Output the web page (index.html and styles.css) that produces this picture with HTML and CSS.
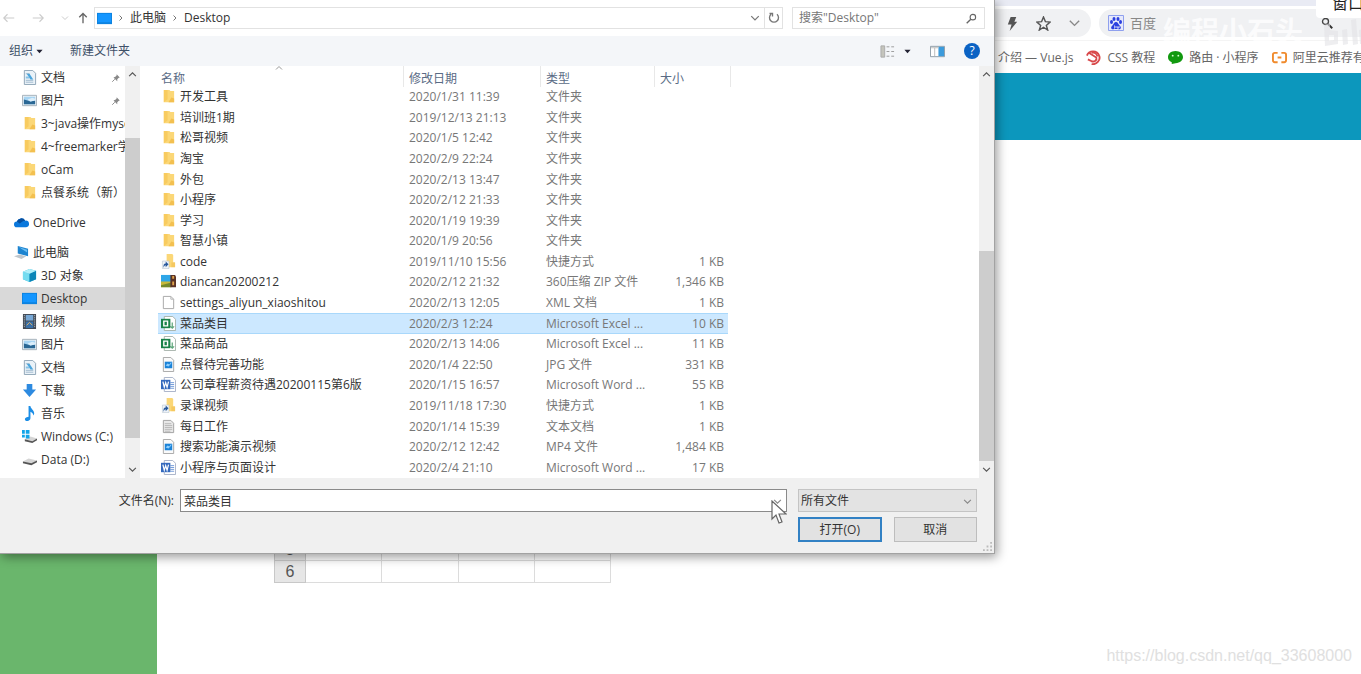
FILE: index.html
```html
<!DOCTYPE html>
<html lang="zh-CN">
<head>
<meta charset="utf-8">
<title>打开</title>
<link rel="stylesheet" href="styles.css">
</head>
<body>
<svg class="defs" aria-hidden="true">
  <symbol id="folder" viewBox="0 0 16 16"><path d="M3 1h6l1 1h4v12H3z" fill="#fbd777"/><path d="M3 1h4v10l-4 3z" fill="#f8cb5f"/><path d="M11 9l3 1v4H8z" fill="#f3c050"/></symbol>
  <symbol id="shortcut" viewBox="0 0 16 16"><path d="M6 0h6l1 1v8h2v5H6z" fill="#fbd777"/><path d="M11 9h4v5h-4z" fill="#f5c860"/><path d="M1.500 7.500h7v8h-7z" fill="#eef3f8" stroke="#b8c4d0" stroke-width=".6"/><path d="M3 15c-1-3 0-5 2-5V8l3 3-3 3v-2c-1 0-2 1-2 3z" fill="#28589c"/></symbol>
  <symbol id="zip" viewBox="0 0 16 16"><path d="M0 1h11v8H0z" fill="#2ea6e8"/><path d="M0 8h11v6H0z" fill="#c8b93a"/><path d="M0 12l11-3v5H0z" fill="#76892c"/><path d="M10 1h5l1 2v11h-6z" fill="#5b3326"/><path d="M12 2h2v3h-2zm0 6h2v4h-2z" fill="#e0a44b"/></symbol>
  <symbol id="file" viewBox="0 0 16 16"><path d="M2.500 1.500h8l3 3v10h-11z" fill="#fff" stroke="#a5a5a5"/><path d="M10.500 1.500v3h3" fill="none" stroke="#b5b5b5"/></symbol>
  <symbol id="text" viewBox="0 0 16 16"><path d="M2.500 1.500h8l3 3v10h-11z" fill="#e8e8e8" stroke="#a0a0a0"/><path d="M4 5h7M4 7h8M4 9h8M4 11h8M4 13h6" stroke="#aaa" stroke-width=".8"/></symbol>
  <symbol id="excel" viewBox="0 0 16 16"><path d="M3.500.5h9l3 3v12h-12z" fill="#fff" stroke="#a5b2aa"/><path d="M12 7v6M10 11l2 2 2-2" fill="none" stroke="#5ea67b" stroke-width="1.300"/><path d="M0 3h10v10H0z" fill="#1a824a"/><path d="M3 5.500h4v5H3z" fill="none" stroke="#fff" stroke-width="1.500"/></symbol>
  <symbol id="word" viewBox="0 0 16 16"><path d="M3.500.5h9l3 3v12h-12z" fill="#fff" stroke="#a5b0c6"/><path d="M10 6h4M10 8h4M10 10h4M10 12h4" stroke="#6e97d8"/><path d="M0 3h10v10H0z" fill="#3469bd"/><path d="M2 5l1.500 6L5 6l1.500 5L8 5" fill="none" stroke="#fff" stroke-width="1.300"/></symbol>
  <symbol id="media" viewBox="0 0 16 16"><path d="M2.500.5h8l3 3v12h-11z" fill="#fafafa" stroke="#a5a5a5"/><path d="M4 5h8v7H4z" fill="#1b83d8"/><path d="M5 9l2-2 2 1 2-3v2l-3 3z" fill="#8fd0ff"/></symbol>
  <symbol id="doc" viewBox="0 0 16 16"><path d="M2.500.5h9l3 3v12h-12z" fill="#eaf2f8" stroke="#8da3b5"/><path d="M4 4h4M4 11h8M4 13h8" stroke="#9eb8cc"/><path d="M5 4h3l4 6H9z" fill="#4aa4dc"/><path d="M4 7h3l1 2H4z" fill="#88c2e6"/></symbol>
  <symbol id="picture" viewBox="0 0 16 16"><path d="M.5 2.500h15v11H.5z" fill="#e8eef3" stroke="#a3afb9"/><path d="M2 4h12v8H2z" fill="#a6d4f3"/><path d="M2 7l4 1 3 1 5-1v4H2z" fill="#2a6794"/><path d="M6 7l5-2 3 1v2l-5 1z" fill="#dceefa"/></symbol>
  <symbol id="desktop" viewBox="0 0 16 16"><path d="M0 2h16v12H0z" fill="#0d83e0"/><path d="M1 3h14v9H1z" fill="#1496ff"/></symbol>
  <symbol id="cube" viewBox="0 0 16 16"><path d="M1 4l7-3 7 2v9l-7 3-7-3z" fill="#35b5dc"/><path d="M1 4l7 2v9l-7-3z" fill="#74dcf0"/><path d="M8 6l7-3v9l-7 3z" fill="#0c86b8"/><path d="M1 4l7-3 7 2-7 3z" fill="#b1eff9"/></symbol>
  <symbol id="video" viewBox="0 0 16 16"><path d="M1 0h14v16H1z" fill="#424953"/><path d="M4 1h8v6H4z" fill="#78a8d6"/><path d="M4 8h8v7H4z" fill="#3a70a8"/><path d="M5 12l3-3 3 3" stroke="#e6b25e" fill="none"/><path d="M2.500 1v14M13.500 1v14" stroke="#b9c2ca" stroke-dasharray="1 1"/></symbol>
  <symbol id="down" viewBox="0 0 16 16"><path d="M5 1h6v6h4l-7 8-7-8h4z" fill="#2d8ae0"/></symbol>
  <symbol id="music" viewBox="0 0 16 16"><path d="M7 0h2c0 3 4 4 4 8 0 1-1 2-1 2 0-2-1-3-3-4v7c0 2-2 3-4 3s-3-3 0-4l2-.5z" fill="#1c8ee6"/></symbol>
  <symbol id="drive" viewBox="0 0 16 16"><path d="M1 10l6-3 9 2-6 4z" fill="#d5d5d5"/><path d="M1 10l9 2 6-3v2l-6 3-9-2z" fill="#555"/></symbol>
  <symbol id="windrive" viewBox="0 0 16 16"><path d="M3 11l6-3 7 2-5 3z" fill="#d5d5d5"/><path d="M3 11l8 2 5-3v2l-5 3-8-2z" fill="#555"/><path d="M0 1h3v4H0zM4 1h4v4H4zM0 6h3v3H0zM4 6h4v4H4z" fill="#12a4e8"/></symbol>
  <symbol id="cloud" viewBox="0 0 16 16"><path d="M3 13a3 3 0 0 1 0-6 5 5 0 0 1 9-1 3.500 3.500 0 0 1 1 7z" fill="#0a78dc"/><path d="M3 7a5 5 0 0 1 9-1c-3 0-4 2-6 3z" fill="#064fa0"/></symbol>
  <symbol id="pc" viewBox="0 0 16 16"><path d="M4 1l11 3v8L4 9z" fill="#1d84d0"/><path d="M5 2l9 3v3z" fill="#69bdf2"/><path d="M0 12l6-2 7 2-5 3z" fill="#bfc6cc"/></symbol>
  <symbol id="pin" viewBox="0 0 16 16"><path d="M9 2l5 5-2 1-2 2v3L4 7l3-1 2-2z" fill="#888"/><path d="M6 10l-4 4" stroke="#888" stroke-width="1.500"/></symbol>
  <symbol id="chev-down" viewBox="0 0 16 16"><path d="M2 5l6 6 6-6" fill="none" stroke="currentColor" stroke-width="2"/></symbol>
  <symbol id="chev-up" viewBox="0 0 16 16"><path d="M2 11l6-6 6 6" fill="none" stroke="currentColor" stroke-width="2"/></symbol>
  <symbol id="chev-right" viewBox="0 0 16 16"><path d="M5 3l5 5-5 5" fill="none" stroke="currentColor" stroke-width="2"/></symbol>
  <symbol id="caret" viewBox="0 0 16 16"><path d="M1 4h14l-7 8z" fill="currentColor"/></symbol>
  <symbol id="arrow" viewBox="0 0 16 16"><path d="M1 8h14M6 3L1 8l5 5" fill="none" stroke="currentColor" stroke-width="1.500"/></symbol>
  <symbol id="arrow-up" viewBox="0 0 16 16"><path d="M8 15V2M3 7l5-5 5 5" fill="none" stroke="currentColor" stroke-width="1.800"/></symbol>
</svg>

<div class="browser">
  <header class="chrome">
    <div class="tabstrip"></div>
    <div class="addressbar">
      <div class="tools">
        <button aria-label="极速模式"><svg viewBox="0 0 16 16"><path d="M6 1h6l-2 5h3L5 16l2-7H3z" fill="#555"/></svg></button>
        <button aria-label="收藏"><svg viewBox="0 0 16 16"><path d="M8 1l2 5 5 .5-4 3.500 1.500 5L8 12l-4.500 3L5 10 1 6.500 6 6z" fill="none" stroke="#555" stroke-width="1.500"/></svg></button>
        <button aria-label="更多"><svg viewBox="0 0 16 16"><path d="M3 5l5 5 5-5" fill="none" stroke="#888" stroke-width="1.500"/></svg></button>
      </div>
      <div class="engine">
        <svg class="paw" viewBox="0 0 16 16"><path d="M.5.5h15v15H.5z" fill="#e6e9fb" stroke="#8fa0ee"/><g fill="#2b3fdf"><ellipse cx="3.500" cy="7" rx="1.500" ry="2"/><ellipse cx="6" cy="4" rx="1.500" ry="2"/><ellipse cx="10" cy="4" rx="1.500" ry="2"/><ellipse cx="12.500" cy="7" rx="1.500" ry="2"/><path d="M8 7c2 0 2 2 4 4s0 4-2 3H6c-2 1-4-1-2-3s2-4 4-4z"/></g><path d="M6 11h1v2H6m3-2v2h2v-2" fill="none" stroke="#fff" stroke-width=".8"/></svg>
        <input type="text" placeholder="百度" aria-label="百度">
        <svg class="lens" viewBox="0 0 16 16"><circle cx="6" cy="6" r="4" fill="none" stroke="#444" stroke-width="1.800"/><path d="M9 9l6 6" stroke="#333" stroke-width="2.500"/></svg>
      </div>
    </div>
    <nav class="bookmarks">
      <a href="#">介绍 — Vue.js</a>
      <a href="#"><svg viewBox="0 0 16 16"><g fill="none" stroke="#d8494b" stroke-width="2"><path d="M1 6c2-6 11-6 13 0 2 5-3 10-8 9"/><path d="M3 3l8 5c1 3-2 5-5 4l-4-2"/><path d="M6 3c4-1 6 2 6 4"/></g></svg>CSS 教程</a>
      <a href="#"><svg viewBox="0 0 16 16"><path d="M8 1c5 0 8 3 8 6.500S13 14 8 14l-4 1v-2C1 12 0 10 0 7.500 0 4 3 1 8 1z" fill="#11990f"/><circle cx="5" cy="6" r="1" fill="#d8ffd0"/><circle cx="11" cy="6" r="1" fill="#d8ffd0"/></svg>路由 · 小程序</a>
      <a href="#"><svg viewBox="0 0 16 16"><path d="M6 3H3Q1 3 1 5v6q0 2 2 2h3M10 3h3q2 0 2 2v6q0 2-2 2h-3M6 8h4" fill="none" stroke="#f08a2c" stroke-width="2"/></svg>阿里云推荐有奖</a>
    </nav>
  </header>
  <div class="banner"></div>
  <div class="page">
    <aside class="menu"></aside>
    <main class="content">
      <table class="sheet">
        <tr><th>1</th><td></td><td></td><td></td><td></td></tr>
        <tr><th>2</th><td></td><td></td><td></td><td></td></tr>
        <tr><th>3</th><td></td><td></td><td></td><td></td></tr>
        <tr><th>4</th><td></td><td></td><td></td><td></td></tr>
        <tr><th>5</th><td></td><td></td><td></td><td></td></tr>
        <tr><th>6</th><td></td><td></td><td></td><td></td></tr>
      </table>
    </main>
  </div>
</div>

<div class="brand">编程小石头</div>
<svg class="bili" viewBox="0 0 44 28"><path d="M3 6l6-2v7l8 1v13L4 27zM8 16v6l5-1v-5zM21 11l5-1 1 15-5 1zM30 1l5-1 2 25-5 1zM38 11l5-1 1 15h-5z" fill="#e2e3e6" fill-opacity=".6"/></svg>
<div class="window-tip">窗口</div>
<div class="credit">https://blog.csdn.net/qq_33608000</div>

<section class="dialog" role="dialog" aria-label="打开">
  <div class="location">
    <button class="nav off" aria-label="后退"><svg><use href="#arrow"/></svg></button>
    <button class="nav off" aria-label="前进"><svg class="flip"><use href="#arrow"/></svg></button>
    <button class="nav small off" aria-label="最近"><svg><use href="#chev-down"/></svg></button>
    <button class="nav up" aria-label="向上"><svg><use href="#arrow-up"/></svg></button>
    <div class="path">
      <svg class="icon"><use href="#desktop"/></svg>
      <svg class="sep"><use href="#chev-right"/></svg>
      <span>此电脑</span>
      <svg class="sep"><use href="#chev-right"/></svg>
      <span>Desktop</span>
      <button class="drop" aria-label="历史"><svg><use href="#chev-down"/></svg></button>
      <button class="reload" aria-label="刷新"><svg viewBox="0 0 16 16"><path d="M4 3a6 6 0 1 0 8 0M2 2h4v4" fill="none" stroke="#777" stroke-width="1.800"/></svg></button>
    </div>
    <div class="search">
      <input type="text" placeholder="搜索&quot;Desktop&quot;" aria-label="搜索">
      <svg viewBox="0 0 16 16"><circle cx="10" cy="6" r="4" fill="none" stroke="#666" stroke-width="1.600"/><path d="M7 9l-6 6" stroke="#666" stroke-width="2"/></svg>
    </div>
  </div>

  <div class="commands">
    <button>组织<svg class="tri"><use href="#caret"/></svg></button>
    <button>新建文件夹</button>
    <span class="grow"></span>
    <button class="view" aria-label="视图"><svg class="icon" viewBox="0 0 16 16"><path d="M1 2h4v12H1z" fill="#c4c4bc" stroke="#aaa"/><path d="M7 3h3M12 3h3M7 8h3M12 8h3M7 13h3M12 13h3" stroke="#999"/></svg><svg class="tri"><use href="#caret"/></svg></button>
    <button aria-label="预览窗格"><svg class="icon" viewBox="0 0 16 16"><path d="M.5 2.500h15v11H.5z" fill="#fff" stroke="#8c9aa5"/><path d="M9 3h6v10H9z" fill="#3c9bdc"/><path d="M1 4h8M5 4v9" stroke="#bbb"/></svg></button>
    <button class="help" aria-label="帮助">?</button>
  </div>

  <div class="panes">
    <nav class="tree">
      <a class="sub" href="#"><svg class="icon"><use href="#doc"/></svg><span>文档</span><svg class="pin"><use href="#pin"/></svg></a>
      <a class="sub" href="#"><svg class="icon"><use href="#picture"/></svg><span>图片</span><svg class="pin"><use href="#pin"/></svg></a>
      <a class="sub" href="#"><svg class="icon"><use href="#folder"/></svg><span>3~java操作mysql</span></a>
      <a class="sub" href="#"><svg class="icon"><use href="#folder"/></svg><span>4~freemarker学习</span></a>
      <a class="sub" href="#"><svg class="icon"><use href="#folder"/></svg><span>oCam</span></a>
      <a class="sub" href="#"><svg class="icon"><use href="#folder"/></svg><span>点餐系统（新）</span></a>
      <a class="root" href="#"><svg class="icon"><use href="#cloud"/></svg><span>OneDrive</span></a>
      <a class="root" href="#"><svg class="icon"><use href="#pc"/></svg><span>此电脑</span></a>
      <a class="sub" href="#"><svg class="icon"><use href="#cube"/></svg><span>3D 对象</span></a>
      <a class="sub current" href="#"><svg class="icon"><use href="#desktop"/></svg><span>Desktop</span></a>
      <a class="sub" href="#"><svg class="icon"><use href="#video"/></svg><span>视频</span></a>
      <a class="sub" href="#"><svg class="icon"><use href="#picture"/></svg><span>图片</span></a>
      <a class="sub" href="#"><svg class="icon"><use href="#doc"/></svg><span>文档</span></a>
      <a class="sub" href="#"><svg class="icon"><use href="#down"/></svg><span>下载</span></a>
      <a class="sub" href="#"><svg class="icon"><use href="#music"/></svg><span>音乐</span></a>
      <a class="sub" href="#"><svg class="icon"><use href="#windrive"/></svg><span>Windows (C:)</span></a>
      <a class="sub" href="#"><svg class="icon"><use href="#drive"/></svg><span>Data (D:)</span></a>
    </nav>
    <div class="scrollbar tree-bar"><svg><use href="#chev-up"/></svg><div class="rail"><div class="thumb"></div></div><svg><use href="#chev-down"/></svg></div>
    <div class="list">
      <table class="files">
        <thead><tr><th class="c-name">名称<svg class="sort"><use href="#chev-up"/></svg></th><th class="c-date">修改日期</th><th class="c-type">类型</th><th class="c-size">大小</th></tr></thead>
        <tbody>
          <tr><td><svg class="icon"><use href="#folder"/></svg>开发工具</td><td>2020/1/31 11:39</td><td>文件夹</td><td></td></tr>
          <tr><td><svg class="icon"><use href="#folder"/></svg>培训班1期</td><td>2019/12/13 21:13</td><td>文件夹</td><td></td></tr>
          <tr><td><svg class="icon"><use href="#folder"/></svg>松哥视频</td><td>2020/1/5 12:42</td><td>文件夹</td><td></td></tr>
          <tr><td><svg class="icon"><use href="#folder"/></svg>淘宝</td><td>2020/2/9 22:24</td><td>文件夹</td><td></td></tr>
          <tr><td><svg class="icon"><use href="#folder"/></svg>外包</td><td>2020/2/13 13:47</td><td>文件夹</td><td></td></tr>
          <tr><td><svg class="icon"><use href="#folder"/></svg>小程序</td><td>2020/2/12 21:33</td><td>文件夹</td><td></td></tr>
          <tr><td><svg class="icon"><use href="#folder"/></svg>学习</td><td>2020/1/19 19:39</td><td>文件夹</td><td></td></tr>
          <tr><td><svg class="icon"><use href="#folder"/></svg>智慧小镇</td><td>2020/1/9 20:56</td><td>文件夹</td><td></td></tr>
          <tr><td><svg class="icon"><use href="#shortcut"/></svg>code</td><td>2019/11/10 15:56</td><td>快捷方式</td><td>1 KB</td></tr>
          <tr><td><svg class="icon"><use href="#zip"/></svg>diancan20200212</td><td>2020/2/12 21:32</td><td>360压缩 ZIP 文件</td><td>1,346 KB</td></tr>
          <tr><td><svg class="icon"><use href="#file"/></svg>settings_aliyun_xiaoshitou</td><td>2020/2/13 12:05</td><td>XML 文档</td><td>1 KB</td></tr>
          <tr class="selected"><td><svg class="icon"><use href="#excel"/></svg>菜品类目</td><td>2020/2/3 12:24</td><td>Microsoft Excel ...</td><td>10 KB</td></tr>
          <tr><td><svg class="icon"><use href="#excel"/></svg>菜品商品</td><td>2020/2/13 14:06</td><td>Microsoft Excel ...</td><td>11 KB</td></tr>
          <tr><td><svg class="icon"><use href="#media"/></svg>点餐待完善功能</td><td>2020/1/4 22:50</td><td>JPG 文件</td><td>331 KB</td></tr>
          <tr><td><svg class="icon"><use href="#word"/></svg>公司章程薪资待遇20200115第6版</td><td>2020/1/15 16:57</td><td>Microsoft Word ...</td><td>55 KB</td></tr>
          <tr><td><svg class="icon"><use href="#shortcut"/></svg>录课视频</td><td>2019/11/18 17:30</td><td>快捷方式</td><td>1 KB</td></tr>
          <tr><td><svg class="icon"><use href="#text"/></svg>每日工作</td><td>2020/1/14 15:39</td><td>文本文档</td><td>1 KB</td></tr>
          <tr><td><svg class="icon"><use href="#media"/></svg>搜索功能演示视频</td><td>2020/2/12 12:42</td><td>MP4 文件</td><td>1,484 KB</td></tr>
          <tr><td><svg class="icon"><use href="#word"/></svg>小程序与页面设计</td><td>2020/2/4 21:10</td><td>Microsoft Word ...</td><td>17 KB</td></tr>
        </tbody>
      </table>
    </div>
    <div class="scrollbar list-bar"><svg><use href="#chev-up"/></svg><div class="rail"><div class="thumb"></div></div><svg><use href="#chev-down"/></svg></div>
  </div>

  <footer class="footer">
    <label for="fname">文件名(N):</label>
    <div class="combo"><input id="fname" type="text" value="菜品类目"><svg><use href="#chev-down"/></svg></div>
    <div class="filter"><select aria-label="文件类型"><option>所有文件</option></select><svg><use href="#chev-down"/></svg></div>
    <div class="actions"><button class="primary">打开(O)</button><button>取消</button></div>
  </footer>
  <svg class="grip" viewBox="0 0 10 10"><path d="M8 0h2v2H8zM8 4h2v2H8zM4 4h2v2H4zM8 8h2v2H8zM4 8h2v2H4zM0 8h2v2H0z" fill="#bbb"/></svg>
  <svg class="pointer" viewBox="0 0 16 24"><path d="M1 1v18l4-4 3 8 3-1-3-8h7z" fill="#fff" stroke="#666" stroke-width="1.200"/></svg>
</section>
</body>
</html>
```
FILE: styles.css
```css
* { box-sizing: border-box; }
html, body { height: 100%; }
body {
  margin: 0;
  position: relative;
  overflow: hidden;
  background: #fff;
  color: #333;
  font: 12px/16px "Open Sans", "Noto Sans CJK SC", sans-serif;
}
button, input, select { font: inherit; color: inherit; border: 0; padding: 0; margin: 0; background: none; outline: 0; }
a { color: inherit; text-decoration: none; }
svg { display: block; flex: none; }
.defs { position: absolute; width: 0; height: 0; }
.icon { width: 15px; height: 15px; }

/* browser behind the dialog */
.browser { display: flex; flex-direction: column; min-height: 100%; }
.chrome { height: 73px; background: #fff; padding-left: calc(100% - 366px); }
.tabstrip { height: 6px; background: #e9ebf4; }
.addressbar { display: flex; gap: 8px; padding: 3px 0; border-bottom: 1px solid #f4f4f4; }
.tools { display: flex; align-items: center; gap: 16px; width: 96px; height: 28px; padding-left: 10px; background: #f0f1f3; border-radius: 0 14px 14px 0; }
.tools svg { width: 15px; height: 15px; }
.engine { flex: 1; display: flex; align-items: center; gap: 6px; padding: 0 28px 0 9px; background: #f0f1f3; border-radius: 14px 0 0 14px; }
.engine input { flex: 1; min-width: 0; font-size: 13px; }
.engine input::placeholder { color: #888; opacity: 1; }
.paw { width: 16px; height: 16px; }
.lens { width: 12px; height: 12px; }
.bookmarks { display: flex; align-items: center; gap: 13px; height: 33px; padding-left: 3px; white-space: nowrap; overflow: hidden; color: #666; }
.bookmarks a { display: flex; align-items: center; gap: 6px; }
.bookmarks svg { width: 15px; height: 15px; }
.banner { height: 67px; background: #0c97bd; }
.page { flex: 1; display: flex; }
.menu { width: 157px; background: #6ab66c; }
.content { flex: 1; padding: 310px 0 0 117px; }
.sheet { border-collapse: collapse; table-layout: fixed; width: 337px; }
.sheet th, .sheet td { height: 22px; padding: 0; border: 1px solid #dcdcdc; }
.sheet th { width: 31px; background: #e6e6e6; border-color: #c8c8c8; font: 16px/20px "Liberation Sans", sans-serif; color: #555; }

/* overlays */
.brand { position: absolute; top: 12px; right: 58px; font: bold 28px/36px "Noto Sans CJK SC", sans-serif; color: rgba(255, 255, 255, .75); }
.bili { position: absolute; top: 19px; right: -4px; width: 44px; height: 28px; }
.window-tip { position: absolute; top: 0; right: 0; width: 45px; height: 18px; padding-left: 16px; overflow: hidden; background: #fff; border-radius: 0 0 0 4px; color: #222; font: 16px/4px "Noto Sans CJK SC", sans-serif; white-space: nowrap; }
.credit { position: absolute; right: 9px; bottom: 8px; font: 16px/20px "Liberation Sans", sans-serif; color: #e0e0e0; }

/* file dialog */
.dialog { position: absolute; top: 0; left: 0; width: calc(100% - 366px); background: #f0f0f0; border: solid #a2a2a2; border-width: 0 1px 1px 0; box-shadow: 2px 3px 10px rgba(0, 0, 0, .4); }
.location { display: flex; align-items: center; height: 36px; padding: 0 9px 0 3px; background: #fff; }
.nav { width: 29px; color: #666; display: grid; place-items: center start; }
.nav svg { width: 12px; height: 12px; }
.nav.off { color: #ccc; }
.nav.small { width: 16px; }
.nav.small svg { width: 8px; height: 8px; }
.nav.up { width: 17px; }
.flip { transform: scaleX(-1); }
.path { flex: 1; display: flex; align-items: center; height: 22px; padding-left: 2px; border: 1px solid #e2e2e2; }
.sep { width: 8px; height: 8px; margin: 0 5px; color: #777; }
.drop { margin-left: auto; padding-right: 4px; color: #777; }
.drop svg { width: 10px; height: 10px; }
.reload { display: grid; place-items: center; width: 18px; height: 20px; border-left: 1px solid #e2e2e2; }
.reload svg { width: 12px; height: 12px; }
.search { display: flex; align-items: center; width: 193px; height: 22px; margin-left: 9px; padding: 0 7px 0 6px; border: 1px solid #e2e2e2; }
.search input { flex: 1; min-width: 0; }
.search input::placeholder { color: #777; opacity: 1; }
.search svg { width: 11px; height: 11px; }

.commands { display: flex; align-items: center; gap: 19px; height: 30px; padding: 0 14px 0 9px; background: #f4f6f9; color: #3e5068; }
.commands button { display: flex; align-items: center; gap: 3px; }
.commands button:first-child { padding-right: 8px; }
.grow { flex: 1; }
.tri { width: 7px; height: 7px; color: #223; }
.view .tri { margin-left: 6px; }
.commands .help { justify-content: center; width: 16px; height: 16px; border-radius: 50%; background: #0a62c4; color: #fff; }

.panes { display: flex; height: 412px; background: #fff; }
.tree { width: 125px; overflow: hidden; white-space: nowrap; }
.tree a { display: flex; align-items: center; gap: 4px; height: 23px; }
.tree .sub { padding-left: 22px; }
.tree .root { margin: 7px 0; padding-left: 14px; }
.tree .root + .root { margin: 0; }
.tree .current { background: #d9d9d9; }
.pin { width: 10px; height: 10px; margin-left: auto; margin-right: 4px; }
.scrollbar { display: flex; flex-direction: column; align-items: center; justify-content: space-between; width: 15px; padding: 4px 0; background: #f0f0f0; color: #555; }
.scrollbar > svg { width: 9px; height: 9px; }
.rail { flex: 1; align-self: stretch; }
.thumb { background: #cdcdcd; }
.tree-bar .rail { padding-top: 59px; }
.tree-bar .thumb { height: 300px; }
.list-bar .rail { padding-top: 172px; }
.list-bar .thumb { height: 210px; }
.list { flex: 1; min-width: 0; padding-left: 18px; }
.files { width: 573px; height: 100%; table-layout: fixed; border-spacing: 0; color: #777; white-space: nowrap; }
.files th { position: relative; height: 21px; padding: 4px 0 0 5px; border-right: 1px solid #e8e8e8; text-align: left; font-weight: normal; color: #5a6b85; line-height: 16px; }
.files .c-name { width: 246px; padding-left: 3px; }
.files .c-date { width: 137px; }
.files .c-type { width: 114px; }
.sort { position: absolute; top: -2px; left: 117px; width: 8px; height: 8px; color: #999; }
.files td { padding: 0 0 0 5px; line-height: 16px; }
.files td:nth-child(1) { padding-left: 3px; color: #333; }
.files td:nth-child(4) { padding-right: 4px; text-align: right; border-right: 3px solid transparent; background-clip: padding-box; }
.files .icon { display: inline-block; vertical-align: -3px; margin-right: 4px; }
.files .selected td { background-color: #cce8ff; box-shadow: inset 0 1px #a9d8fb, inset 0 -1px #a9d8fb; }

.footer { display: grid; grid-template-columns: 174px 1fr 179px; column-gap: 6px; row-gap: 5px; align-items: center; padding: 11px 17px 11px 0; }
.footer label { text-align: right; }
.combo, .filter { position: relative; height: 23px; }
.combo { margin-right: 5px; border: 1px solid #8a8a8a; background: #fff; }
.combo input { display: block; width: 100%; height: 21px; padding: 0 20px 0 3px; }
.combo svg, .filter svg { position: absolute; top: 7px; right: 4px; width: 9px; height: 9px; color: #888; pointer-events: none; }
.filter { border: 1px solid #c4c4c4; background: #e3e3e3; }
.filter select { display: block; width: 100%; height: 21px; padding-left: 2px; appearance: none; }
.actions { grid-column: 3; display: grid; grid-template-columns: 1fr 1fr; gap: 12px; }
.actions button { height: 25px; background: #e2e2e2; border: 1px solid #bdbdbd; }
.actions .primary { border: 2px solid #3281c4; }
.grip { position: absolute; right: 2px; bottom: 2px; width: 9px; height: 9px; }
.pointer { position: absolute; right: 207px; bottom: 29px; width: 16px; height: 24px; }
```
